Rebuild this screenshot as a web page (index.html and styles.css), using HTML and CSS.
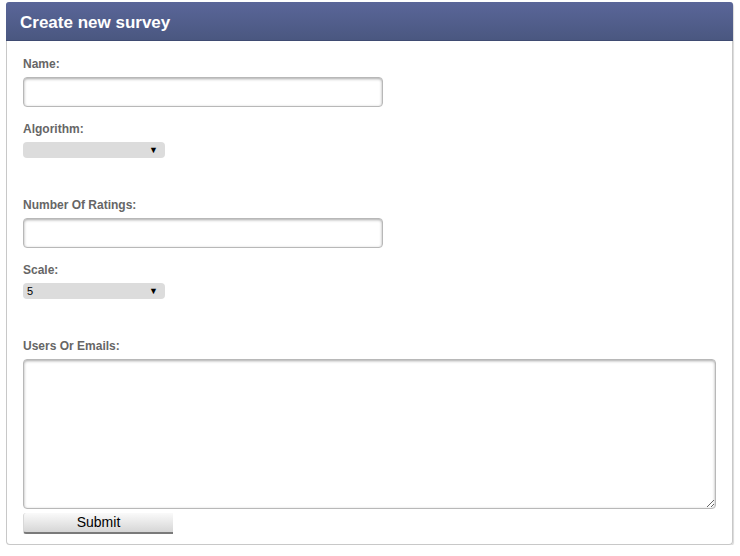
FILE: index.html
```
<!DOCTYPE html>
<html>
<head>
<meta charset="utf-8">
<link rel="stylesheet" href="styles.css">
</head>
<body>
<div class="panel">
  <div class="panel-head">Create new survey</div>
  <form class="panel-body">
    <label class="lbl lbl-first">Name:</label>
    <input class="txt" type="text">
    <label class="lbl lbl-near">Algorithm:</label>
    <div class="sel"><select><option></option></select></div>
    <label class="lbl lbl-far">Number Of Ratings:</label>
    <input class="txt" type="text">
    <label class="lbl lbl-near">Scale:</label>
    <div class="sel"><select><option>5</option></select></div>
    <label class="lbl lbl-far">Users Or Emails:</label>
    <textarea class="area"></textarea>
    <button class="submit" type="button">Submit</button>
  </form>
</div>
</body>
</html>
```
FILE: styles.css
```
html, body { margin: 0; padding: 0; background: #fff; }
body { padding: 2px 0 0 6px; font-family: "Liberation Sans", Arial, sans-serif; }
.panel {
  width: 727px;
  box-sizing: border-box;
  border: 1px solid #c8c8c8;
  border-top: none;
  border-radius: 4px 4px 4px 4px;
  box-shadow: 1px 1px 1px rgba(0,0,0,0.15);
}
.panel-head {
  height: 39px;
  margin: 0 -1px;
  box-sizing: border-box;
  padding: 11px 0 0 14px;
  background: linear-gradient(#5a6699, #4a5780);
  border-radius: 3px 3px 0 0;
  border-bottom: 1px solid #3f4b72;
  color: #fff;
  font-weight: bold;
  font-size: 17px;
  line-height: 20px;
}
.panel-body {
  display: flex;
  flex-direction: column;
  align-items: flex-start;
  padding: 0 15px 10px 16px;
  margin: 0;
}
.lbl {
  display: block;
  font-size: 12px;
  font-weight: bold;
  color: #666;
  line-height: 15px;
  margin-bottom: 6px;
}
.lbl-first { margin-top: 16px; margin-bottom: 5px; }
.lbl-near { margin-top: 15px; margin-bottom: 5px; }
.lbl-far { margin-top: 40px; margin-bottom: 5px; }
.txt {
  width: 360px;
  height: 30px;
  box-sizing: border-box;
  margin: 0;
  border: 1px solid #b8b8b8;
  border-radius: 4px;
  box-shadow: inset 0 1px 3px rgba(0,0,0,0.35);
  background: #fff;
  outline: none;
}
.sel { position: relative; width: 142px; height: 16px; }
.sel select {
  display: block;
  -webkit-appearance: none;
  appearance: none;
  width: 142px;
  height: 16px;
  margin: 0;
  padding: 0 0 0 4px;
  border: none;
  border-radius: 4px;
  background: #dcdcdc;
  font-family: "Liberation Sans", Arial, sans-serif;
  font-size: 11px;
  line-height: 16px;
  color: #000;
}
.sel::after {
  content: "\25BC";
  position: absolute;
  right: 7px;
  top: 3px;
  font-size: 9px;
  line-height: 10px;
  color: #000;
  pointer-events: none;
}
.area {
  display: block;
  width: 693px;
  height: 150px;
  box-sizing: border-box;
  margin: 0;
  border: 1px solid #b8b8b8;
  border-radius: 4px;
  box-shadow: inset 0 1px 3px rgba(0,0,0,0.35);
  background: #fff;
  outline: none;
}
.submit {
  margin-top: 4px;
  width: 150px;
  height: 21px;
  padding: 0;
  border: none;
  border-bottom: 2px solid #7a7a7a;
  border-left: 1px solid #d8d8d8;
  border-radius: 3px 0 0 3px;
  background: linear-gradient(#fafafa, #d6d6d6);
  font-family: "Liberation Sans", Arial, sans-serif;
  font-size: 14px;
  color: #000;
  line-height: 19px;
}
```
